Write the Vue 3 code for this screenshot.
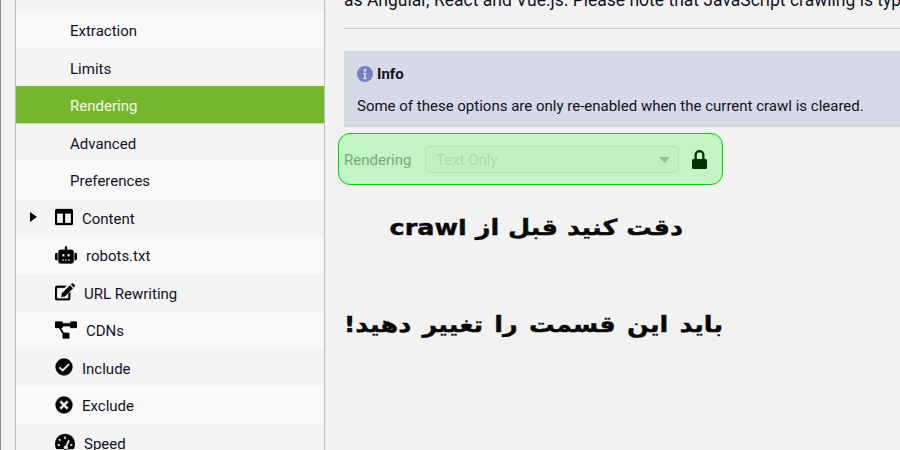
<script setup>
const subItems = [
  { label: 'Extraction', tone: 'light' },
  { label: 'Limits', tone: 'dark' },
  { label: 'Rendering', tone: 'active' },
  { label: 'Advanced', tone: 'dark' },
  { label: 'Preferences', tone: 'light' },
]

const iconItems = [
  { label: 'Content', tone: 'dark', w: 18, vw: 18, caret: true,
    d: 'M1.500 1h15A1.500 1.500 0 0 1 18 2.500v13a1.500 1.500 0 0 1-1.500 1.500h-15A1.500 1.500 0 0 1 0 15.500v-13A1.500 1.500 0 0 1 1.500 1zM2 5.500v9.500h6V5.500zM10 5.500v9.500h6V5.500z' },
  { label: 'robots.txt', tone: 'light', w: 22, vw: 23,
    d: 'M10.500 0h2v3.500h-2zM6 3.500h11a2.500 2.500 0 0 1 2.500 2.500v9.500A2.500 2.500 0 0 1 17 18H6a2.500 2.500 0 0 1-2.500-2.500V6A2.500 2.500 0 0 1 6 3.500zM7.500 8v2.500H10V8zM13 8v2.500h2.500V8zM7.500 13.500V15h2v-1.500zM10.700 13.500V15h1.600v-1.500zM13.500 13.500V15h2v-1.500zM1.500 7h1v7.500h-1A1.500 1.500 0 0 1 0 13V8.500A1.500 1.500 0 0 1 1.500 7zM20.500 7h1A1.500 1.500 0 0 1 23 8.500V13a1.500 1.500 0 0 1-1.500 1.500h-1z' },
  { label: 'URL Rewriting', tone: 'dark', w: 20, vw: 21,
    d: 'M2 2.500h10l-2 2H2v11.200h12V11l2-2v6.700a2 2 0 0 1-2 2H2a2 2 0 0 1-2-2V4.500a2 2 0 0 1 2-2zM15.700 2.200l3 3-8.400 8.400-3.600.5.5-3.600zM16.800 1.100l.7-.7a1.300 1.300 0 0 1 1.800 0l1.200 1.200a1.300 1.300 0 0 1 0 1.800l-.7.7z' },
  { label: 'CDNs', tone: 'light', w: 22, vw: 23,
    d: 'M1 0h6a1 1 0 0 1 1 1v1h8V1a1 1 0 0 1 1-1h5a1 1 0 0 1 1 1v5a1 1 0 0 1-1 1h-5a1 1 0 0 1-1-1V5H8v1a1 1 0 0 1-1 1H6.200l3 5H14a1 1 0 0 1 1 1v4a1 1 0 0 1-1 1H9a1 1 0 0 1-1-1v-4l-3.800-6H1a1 1 0 0 1-1-1V1a1 1 0 0 1 1-1z' },
  { label: 'Include', tone: 'dark', w: 18, vw: 18,
    d: 'M9 .5a8.500 8.500 0 1 1 0 17 8.500 8.500 0 0 1 0-17zM13.400 5.300L7.600 11 5 8.500 3.600 9.900l4 4 7.200-7.200z' },
  { label: 'Exclude', tone: 'light', w: 18, vw: 18,
    d: 'M9 .5a8.500 8.500 0 1 1 0 17 8.500 8.500 0 0 1 0-17zM6.200 4.300L4.300 6.200 7.100 9l-2.800 2.800 1.900 1.900L9 10.900l2.800 2.800 1.900-1.900L10.900 9l2.800-2.800-1.900-1.900L9 7.100z' },
  { label: 'Speed', tone: 'dark', w: 20, vw: 20,
    d: 'M10 1a10 10 0 0 1 8.600 15H1.400A10 10 0 0 1 10 1zM9 3.500V6h2V3.500zM4.500 5.500L3.300 6.800 5 8.400l1.300-1.400zM15 7.500l-1.900-.7-2.400 5.600a2.200 2.200 0 1 0 1.800.8zM2.500 11v2H5v-2zM15 11v2h2.500v-2z' },
]
</script>

<template>
  <div class="page">
    <aside class="sidebar">
      <div class="row-top dark"></div>
      <div v-for="item in subItems" :key="item.label" class="row sub" :class="item.tone">
        {{ item.label }}
      </div>
      <div v-for="item in iconItems" :key="item.label" class="row with-icon" :class="item.tone">
        <span class="caret-slot">
          <svg v-if="item.caret" class="caret" width="9" height="12" viewBox="0 0 9 12">
            <path d="M1 1l7 5-7 5z" />
          </svg>
        </span>
        <svg class="icon" :width="item.w" height="18" :viewBox="`0 0 ${item.vw} 18`">
          <path :d="item.d" fill-rule="evenodd" />
        </svg>
        <span class="icon-label">{{ item.label }}</span>
      </div>
    </aside>

    <main class="main">
      <p class="intro">as Angular, React and Vue.js. Please note that JavaScript crawling is typically slower</p>
      <hr class="rule" />
      <section class="info">
        <div class="info-head">
          <svg class="info-icon" width="16" height="16" viewBox="0 0 15 15">
            <path fill-rule="evenodd" d="M7.500 0a7.500 7.500 0 1 1 0 15 7.500 7.500 0 0 1 0-15zM7.500 2.600a1.400 1.400 0 1 0 0 2.800 1.400 1.400 0 0 0 0-2.800zM5.800 6.400v1.300h.9v3.400h-.9v1.300h3.400v-1.300h-.9V6.400z" />
          </svg>
          <strong>Info</strong>
        </div>
        <p class="info-text">Some of these options are only re-enabled when the current crawl is cleared.</p>
      </section>

      <div class="highlight">
        <span class="field-label">Rendering</span>
        <div class="select">
          <span>Text Only</span>
          <svg width="11" height="6" viewBox="0 0 11 6"><path d="M0 0h11L5.500 6z" /></svg>
        </div>
        <svg class="lock" width="15" height="19" viewBox="0 0 15 19">
          <path fill-rule="evenodd" d="M7.500 0A5 5 0 0 1 12.500 5v4h1A1.500 1.500 0 0 1 15 10.500v7a1.500 1.500 0 0 1-1.500 1.500h-12A1.500 1.500 0 0 1 0 17.500v-7A1.500 1.500 0 0 1 1.500 9h1V5A5 5 0 0 1 7.500 0zM7.500 2.300A2.700 2.700 0 0 0 4.800 5v4h5.400V5A2.700 2.700 0 0 0 7.500 2.300z" />
        </svg>
      </div>

      <p class="note note-first" dir="rtl">دقت کنید قبل از crawl</p>
      <p class="note note-second" dir="rtl">باید این قسمت را تغییر دهید!</p>
    </main>
  </div>
</template>

<style>
html, body {
  margin: 0;
  background: #f2f2f2;
}
</style>

<style scoped>
.page {
  display: flex;
  width: 900px;
  height: 450px;
  box-sizing: border-box;
  overflow: hidden;
  border-left: 1px solid #8f8f8f;
  background: #f2f2f2;
  font-family: Roboto, "Liberation Sans", sans-serif;
  font-size: 15px;
  color: #12121f;
}

.sidebar {
  flex: none;
  width: 308px;
  margin-left: 14px;
  border-left: 1px solid #bdbdbd;
  border-right: 1px solid #bdbdbd;
}

.row-top {
  height: 11px;
}

.row {
  height: 37.5px;
  display: flex;
  align-items: center;
  box-sizing: border-box;
  padding-top: 3px;
}

.sub {
  padding-left: 54px;
}

.dark { background: #f4f4f4; }
.light { background: #f9f9f9; }
.active {
  background: #74b62c;
  color: #f4f8ea;
  border-bottom: 1px solid #c4e3a0;
}

.with-icon {
  padding-left: 13px;
}

.caret-slot {
  flex: none;
  width: 26px;
  display: flex;
}

.caret {
  fill: #000;
  margin-top: -3px;
}

.icon {
  flex: none;
  margin-top: -3px;
  fill: #000;
  stroke: #000;
  stroke-width: 0.3;
}

.icon-label {
  margin-left: 9px;
}

.main {
  flex: 1;
  min-width: 0;
  padding-left: 19px;
}

.intro {
  margin: -11px 0 0;
  height: 23px;
  font-size: 17.5px;
  line-height: 23px;
  white-space: nowrap;
}

.rule {
  margin: 16px 0 0;
  border: 0;
  border-top: 1px solid #cfcfcf;
  height: 0;
}

.info {
  margin-top: 22px;
  height: 76px;
  box-sizing: border-box;
  padding: 13px 13px 0;
  background: #d6d9e6;
}

.info-head {
  display: flex;
  align-items: center;
  gap: 4px;
  height: 20px;
}

.info-head strong {
  font-weight: 700;
}

.info-icon {
  fill: #7480c0;
}

.info-text {
  margin: 12px 0 0;
  line-height: 20px;
}

.highlight {
  display: flex;
  align-items: center;
  width: 385px;
  height: 52px;
  box-sizing: border-box;
  margin: 6px 0 0 -6px;
  padding-left: 5px;
  border: 1px solid #00d000;
  border-radius: 12px;
  background: #c3f4c3;
}

.field-label {
  color: #76aa78;
  width: 81px;
  flex: none;
  padding-top: 1px;
}

.select {
  flex: none;
  display: flex;
  align-items: center;
  justify-content: space-between;
  width: 254px;
  height: 27px;
  box-sizing: border-box;
  padding: 1px 8px 0 10px;
  border: 1px solid #b2e4b4;
  border-radius: 4px;
  background: #c0f1c0;
  color: #a9dcab;
}

.select svg {
  fill: #91c193;
}

.lock {
  flex: none;
  margin-left: 13px;
  fill: #003300;
}

.note {
  margin: 0;
  font-family: "DejaVu Sans", sans-serif;
  font-weight: 700;
  font-size: 22px;
  line-height: 30px;
  color: #0a0a0a;
  white-space: nowrap;
  -webkit-text-stroke: 0.4px #0a0a0a;
  transform-origin: right center;
  transform: scaleX(1.16);
}

.note-first {
  margin-top: 28px;
  width: 339px;
}

.note-second {
  margin-top: 67px;
  width: 379px;
  word-spacing: 2px;
}
</style>
